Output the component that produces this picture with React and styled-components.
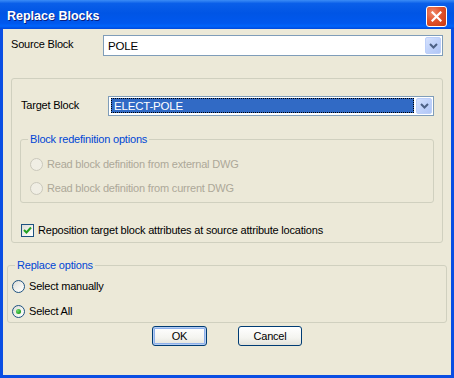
import React from 'react'
import styled, { createGlobalStyle, css } from 'styled-components'

const GlobalStyle = createGlobalStyle`
    html, body {
        margin: 0;
        padding: 0;
        background: #ece9d8;
    }
    body {
        font-family: "Liberation Sans", Arial, sans-serif;
        font-size: 11px;
        letter-spacing: -0.2px;
    }
`;

function Chevron() {
    return (
        <svg width="9" height="6" viewBox="0 0 9 6">
            <path d="M1 1 L4.5 4.5 L8 1" fill="none" stroke="#4d6185" strokeWidth="2" />
        </svg>
    )
}

function Combo(props) {
    return (
        <ComboBox width={props.width} height={props.height}>
            <ComboValue selected={props.selected}>{props.value}</ComboValue>
            <ComboButton>
                <Chevron />
            </ComboButton>
        </ComboBox>
    )
}

function Radio(props) {
    return (
        <OptionRow gap={props.gap}>
            <RadioDot disabled={props.disabled} checked={props.checked} />
            <OptionText disabled={props.disabled}>{props.label}</OptionText>
        </OptionRow>
    )
}

function App() {
    return (
        <Window>
            <GlobalStyle />
            <TitleBar>
                <Title>Replace Blocks</Title>
                <CloseButton>
                    <svg width="11" height="11" viewBox="0 0 11 11">
                        <path d="M1.5 1.5 L9.5 9.5 M9.5 1.5 L1.5 9.5" stroke="#fff" strokeWidth="2.2" strokeLinecap="square" />
                    </svg>
                </CloseButton>
            </TitleBar>
            <Client>
                <SourceRow>
                    <FieldLabel width={92}>Source Block</FieldLabel>
                    <Combo width={340} height={21} value="POLE" />
                </SourceRow>

                <PlainGroup>
                    <TargetRow>
                        <FieldLabel width={87}>Target Block</FieldLabel>
                        <Combo width={326} height={20} value="ELECT-POLE" selected />
                    </TargetRow>

                    <RedefineGroup>
                        <Legend indent={-2}>Block redefinition options</Legend>
                        <Radio disabled label="Read block definition from external DWG" />
                        <Radio disabled gap={11} label="Read block definition from current DWG" />
                    </RedefineGroup>

                    <CheckRow>
                        <CheckBox>
                            <svg width="9" height="9" viewBox="0 0 9 9">
                                <path d="M1 4 L3.5 6.5 L8 1.5" fill="none" stroke="#21a121" strokeWidth="2" />
                            </svg>
                        </CheckBox>
                        <OptionText>Reposition target block attributes at source attribute locations</OptionText>
                    </CheckRow>
                </PlainGroup>

                <ReplaceGroup>
                    <Legend indent={3}>Replace options</Legend>
                    <Radio label="Select manually" />
                    <Radio checked gap={12} label="Select All" />
                </ReplaceGroup>

                <ButtonRow>
                    <PushButton width={55} isDefault>OK</PushButton>
                    <PushButton width={64}>Cancel</PushButton>
                </ButtonRow>
            </Client>
        </Window>
    )
}

const Window = styled.div`
    width: 454px;
    height: 378px;
    display: flex;
    flex-direction: column;
    background: #0a4ee3;
    overflow: hidden;
`;

const TitleBar = styled.div`
    height: 29px;
    flex: none;
    display: flex;
    align-items: center;
    justify-content: space-between;
    padding: 0 7px 0 7px;
    box-sizing: border-box;
    background: linear-gradient(to bottom, #3b8cf6 0%, #0a5fe9 12%, #0055e5 45%, #0058ee 80%, #0064fb 90%, #0048dc 100%);
`;

const Title = styled.div`
    color: #fff;
    font-weight: bold;
    font-size: 12.5px;
    letter-spacing: 0;
    padding-top: 2px;
    text-shadow: 1px 1px 0 #0a1f80;
`;

const CloseButton = styled.div`
    width: 21px;
    height: 21px;
    box-sizing: border-box;
    margin-top: 3px;
    border: 1px solid #fff;
    border-radius: 3px;
    display: flex;
    align-items: center;
    justify-content: center;
    background: radial-gradient(circle at 30% 30%, #f08a6a 0%, #e0532d 45%, #c8380f 100%);
`;

const Client = styled.div`
    flex: 1;
    margin: 0 3px 3px 3px;
    background: #ece9d8;
    display: flex;
    flex-direction: column;
    align-items: flex-start;
`;

const SourceRow = styled.div`
    display: flex;
    align-items: flex-start;
    margin: 6px 0 0 8px;
`;

const FieldLabel = styled.div`
    width: ${props => props.width}px;
    flex: none;
    color: #000;
    line-height: 13px;
    padding-top: 3px;
`;

const ComboBox = styled.div`
    width: ${props => props.width}px;
    height: ${props => props.height}px;
    box-sizing: border-box;
    border: 1px solid #7f9db9;
    background: #fff;
    display: flex;
    align-items: center;
    padding: 1px;
`;

const ComboValue = styled.div`
    flex: 1;
    align-self: stretch;
    display: flex;
    align-items: center;
    padding-left: 3px;
    margin-right: 2px;
    font-size: 11.5px;
    color: #000;
    ${props => props.selected && css`
        background: #316ac5;
        color: #fff;
        outline: 1px dotted #000;
        outline-offset: -1px;
        margin: 0 2px 1px 1px;
    `}
`;

const ComboButton = styled.div`
    width: 16px;
    align-self: stretch;
    box-sizing: border-box;
    border: 1px solid #bccff9;
    border-radius: 2px;
    background: linear-gradient(135deg, #d6e2fd 0%, #c0d2fa 50%, #b1c6f6 100%);
    display: flex;
    align-items: center;
    justify-content: center;
`;

const PlainGroup = styled.div`
    margin: 22px 0 0 8px;
    width: 432px;
    box-sizing: border-box;
    border: 1px solid #d0d0bf;
    border-radius: 3px;
    display: flex;
    flex-direction: column;
    align-items: flex-start;
    padding-bottom: 5px;
`;

const TargetRow = styled.div`
    display: flex;
    align-items: flex-start;
    margin: 17px 0 0 9px;
`;

const Group = styled.fieldset`
    margin: 0;
    min-inline-size: 0;
    box-sizing: border-box;
    border: 1px solid #d0d0bf;
    border-radius: 3px;
    display: flex;
    flex-direction: column;
`;

const RedefineGroup = styled(Group)`
    margin: 17px 0 0 8px;
    width: 414px;
    padding: 12px 0 7px 9px;
`;

const ReplaceGroup = styled(Group)`
    margin: 16px 0 0 4px;
    width: 440px;
    padding: 8px 0 4px 4px;
`;

const Legend = styled.legend`
    color: #0046d5;
    line-height: 13px;
    padding: 0 2px;
    margin-left: ${props => props.indent}px;
`;

const OptionRow = styled.div`
    display: flex;
    align-items: center;
    height: 13px;
    margin-top: ${props => props.gap || 0}px;
`;

const RadioDot = styled.div`
    width: 13px;
    height: 13px;
    box-sizing: border-box;
    border-radius: 50%;
    border: 1px solid ${props => props.disabled ? '#cac8bb' : '#1c5180'};
    background: ${props => props.disabled ? '#f0eee4' : 'linear-gradient(135deg, #dcdcd6 0%, #f4f4f0 60%, #ffffff 100%)'};
    display: flex;
    align-items: center;
    justify-content: center;
    &::after {
        content: '';
        display: ${props => props.checked ? 'block' : 'none'};
        width: 5px;
        height: 5px;
        border-radius: 50%;
        background: radial-gradient(circle at 35% 35%, #6fdc6f 0%, #21a121 70%);
    }
`;

const OptionText = styled.span`
    margin-left: 4px;
    line-height: 13px;
    color: ${props => props.disabled ? '#aca899' : '#000'};
`;

const CheckRow = styled.div`
    display: flex;
    align-items: center;
    margin: 21px 0 0 9px;
`;

const CheckBox = styled.div`
    width: 13px;
    height: 13px;
    box-sizing: border-box;
    border: 1px solid #1c5180;
    background: linear-gradient(135deg, #dcdcd6 0%, #f6f6f3 70%, #ffffff 100%);
    display: flex;
    align-items: center;
    justify-content: center;
`;

const ButtonRow = styled.div`
    align-self: stretch;
    display: flex;
    justify-content: center;
    gap: 31px;
    margin-top: 3px;
`;

const PushButton = styled.div`
    width: ${props => props.width}px;
    height: 20px;
    box-sizing: border-box;
    border: 1px solid #003c74;
    border-radius: 3px;
    background: linear-gradient(to bottom, #ffffff 0%, #f4f4f0 60%, #e3e2da 100%);
    display: flex;
    align-items: center;
    justify-content: center;
    color: #000;
    box-shadow: ${props => props.isDefault ? 'inset 0 0 0 1px #b5cdf3, inset 0 0 0 2px #8eb0ea' : 'none'};
`;

export default App
